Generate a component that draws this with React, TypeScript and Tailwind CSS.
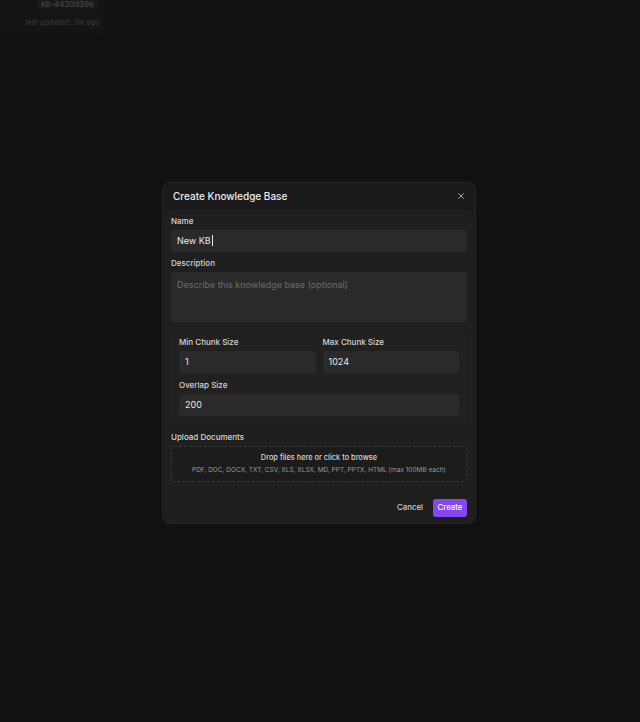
import React from "react";
import { X } from "lucide-react";

const font = { fontFamily: "Inter, 'Noto Sans', sans-serif" };

function Label({ children }: { children: React.ReactNode }) {
  return <div className="text-[8px] leading-[12px] font-medium text-[#d6d6d6] mb-[3px]">{children}</div>;
}

function Field({ value, className = "" }: { value: string; className?: string }) {
  return (
    <div className={"h-[22px] rounded-[3px] bg-[#2a2a2a] px-[6px] flex items-center text-[9px] text-[#e8e8e8] " + className}>
      {value}
    </div>
  );
}

export default function App() {
  return (
    <div className="relative min-h-[722px] w-full bg-[#111111] overflow-hidden" style={font}>
      {/* page behind the modal */}
      <div className="w-[104px] h-[34px] bg-[#141414] rounded-br-md flex flex-col items-center">
        <div className="ml-[31px] px-[4px] rounded-[3px] bg-[#1a1a1a] text-[8px] leading-[9px] text-[#4a4a4a]">kb-4420d39e</div>
        <div className="mt-[8px] ml-[21px] text-[7.5px] leading-[12px] text-[#3c3c3c]">last updated: 2w ago</div>
      </div>

      {/* modal */}
      <div className="fixed inset-0 flex items-center justify-center pb-[17px] pr-[2px]">
        <div className="w-[314px] rounded-lg border border-[#272727] bg-[#1a1a1a] flex flex-col">
          <div className="h-[27px] flex items-center justify-between pl-[10px] pr-[9px]">
            <span className="text-[10px] font-medium text-[#ececec]">Create Knowledge Base</span>
            <X size={10} strokeWidth={2} className="text-[#bdbdbd]" />
          </div>

          <div className="mx-[1px] rounded-lg bg-[#1f1f1f] px-[7px] pt-[5px] pb-[6px]">
            <Label>Name</Label>
            <div className="h-[22px] rounded-[3px] bg-[#2a2a2a] px-[6px] flex items-center text-[9px] text-[#e8e8e8]">
              New KB<span className="ml-[1px] h-[11px] w-px bg-[#e8e8e8]" />
            </div>

            <div className="mt-[5px]">
              <Label>Description</Label>
              <div className="h-[50px] rounded-[3px] bg-[#2a2a2a] px-[6px] pt-[7px] text-[9px] leading-[12px] text-[#6c6c6c]">
                Describe this knowledge base (optional)
              </div>
            </div>

            <div className="mt-[7px] rounded-[4px] bg-[#212121] px-[8px] pt-[7px] pb-[8px]">
              <div className="grid grid-cols-2 gap-[7px]">
                <div>
                  <Label>Min Chunk Size</Label>
                  <Field value="1" />
                </div>
                <div>
                  <Label>Max Chunk Size</Label>
                  <Field value="1024" />
                </div>
              </div>
              <div className="mt-[6px]">
                <Label>Overlap Size</Label>
                <Field value="200" />
              </div>
            </div>

            <div className="mt-[7px]">
              <Label>Upload Documents</Label>
              <div className="h-[36px] rounded-[3px] border border-dashed border-[#3a3a3a] bg-[#1c1c1c] flex flex-col items-center justify-center gap-[2px]">
                <div className="text-[7.4px] leading-[10px] font-medium text-[#d8d8d8]">Drop files here or click to browse</div>
                <div className="text-[6.5px] leading-[10px] text-[#9a9a9a]">
                  PDF, DOC, DOCX, TXT, CSV, XLS, XLSX, MD, PPT, PPTX, HTML (max 100MB each)
                </div>
              </div>
            </div>

            <div className="mt-[17px] flex items-center justify-end gap-[6px]">
              <button className="h-[18px] px-[4px] text-[7.8px] font-medium text-[#d0d0d0]">Cancel</button>
              <button className="h-[18px] w-[34px] rounded-[3px] bg-[#8447f2] text-[7.8px] font-medium text-white">Create</button>
            </div>
          </div>
        </div>
      </div>
    </div>
  );
}
